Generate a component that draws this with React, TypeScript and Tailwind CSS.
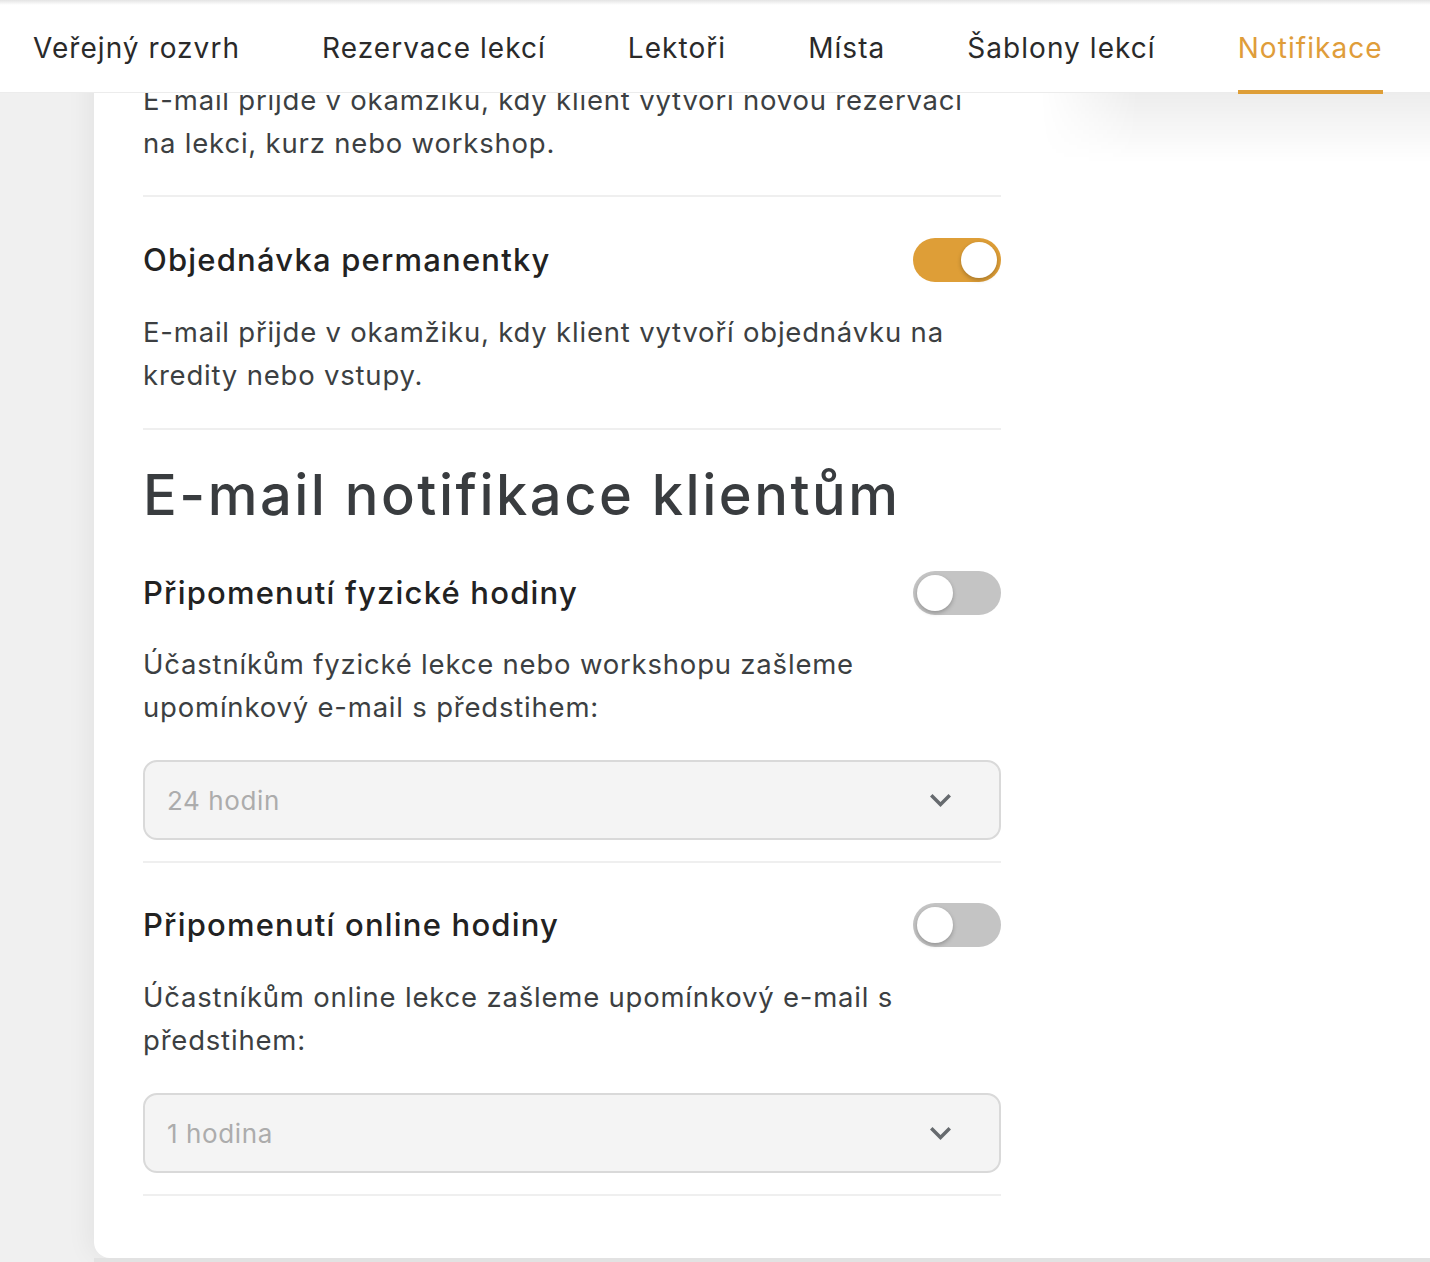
import React from 'react';

const tabs = ['Veřejný rozvrh', 'Rezervace lekcí', 'Lektoři', 'Místa', 'Šablony lekcí', 'Notifikace'];

const Toggle: React.FC<{ on?: boolean }> = ({ on = false }) => (
  <div
    className={`flex h-[44px] w-[88px] shrink-0 items-center rounded-full p-[4px] ${
      on ? 'justify-end bg-[#de9e37]' : 'justify-start bg-[#c4c4c4]'
    }`}
  >
    <div className="h-[36px] w-[36px] rounded-full bg-white shadow-[0_2px_4px_rgba(0,0,0,0.25)]" />
  </div>
);

const Divider: React.FC = () => <div className="h-[2px] w-full bg-[#efefef]" />;

const Select: React.FC<{ value: string }> = ({ value }) => (
  <div className="flex h-[80px] w-full items-center justify-between rounded-[14px] border-2 border-[#d9d9d9] bg-[#f4f4f4] pl-[22px] pr-[48px]">
    <span className="text-[26px] tracking-[0.6px] text-[#acacac]">{value}</span>
    <svg width="21" height="13" viewBox="0 0 21 13" fill="none">
      <path d="M2.5 2.5l8 8 8-8" stroke="#666a6e" strokeWidth="3.5" strokeLinecap="square" />
    </svg>
  </div>
);

const Row: React.FC<{ title: string; on?: boolean }> = ({ title, on }) => (
  <div className="flex h-[44px] items-center justify-between">
    <h3 className="text-[31px] font-medium tracking-[1.2px] text-[#222222]">{title}</h3>
    <Toggle on={on} />
  </div>
);

const Desc: React.FC<{ children: React.ReactNode }> = ({ children }) => (
  <p className="text-[27.5px] leading-[43px] tracking-[0.8px] text-[#3c3f42]">{children}</p>
);

export default function App() {
  return (
    <div
      className="relative h-[1262px] w-[1430px] overflow-hidden bg-[#f0f0f0]"
      style={{ fontFamily: 'Inter, "Noto Sans", sans-serif' }}
    >
      {/* top nav over the scrolled content */}
      <div className="absolute inset-x-0 top-0 z-10 h-[93px] border-b border-[#ececec] bg-white">
        <div className="h-[5px] w-full bg-gradient-to-b from-[#e4e4e4] to-white" />
        <nav className="flex h-[88px] gap-[82px] pl-[33px]">
          {tabs.map((t) => {
            const active = t === 'Notifikace';
            return (
              <div key={t} className="relative flex h-full items-center pb-[3px]">
                <span className={`text-[28px] tracking-[1.05px] ${active ? 'text-[#df9d3a]' : 'text-[#2a2a2a]'}`}>{t}</span>
                {active && <div className="absolute inset-x-0 -bottom-px h-[4px] bg-[#de9e37]" />}
              </div>
            );
          })}
        </nav>
      </div>
      <div className="pointer-events-none absolute left-[1040px] right-0 top-[93px] z-0 h-[70px] bg-gradient-to-b from-[rgba(0,0,0,0.07)] to-transparent [mask-image:linear-gradient(to_right,transparent,black_25%)]" />

      {/* card */}
      <div className="ml-[94px] h-[1258px] rounded-bl-[16px] bg-white shadow-[-6px_0_24px_rgba(0,0,0,0.05)]">
        <div className="w-[907px] pl-[49px] pt-[79px]">
          <Desc>
            E-mail přijde v okamžiku, kdy klient vytvoří novou rezervaci
            <br />
            na lekci, kurz nebo workshop.
          </Desc>
          <div className="mt-[30px]">
            <Divider />
          </div>

          <div className="mt-[41px]">
            <Row title="Objednávka permanentky" on />
          </div>
          <div className="mt-[29px]">
            <Desc>
              E-mail přijde v okamžiku, kdy klient vytvoří objednávku na
              <br />
              kredity nebo vstupy.
            </Desc>
          </div>
          <div className="mt-[31px]">
            <Divider />
          </div>

          <h2 className="mt-[31px] h-[68px] text-[56px] font-medium leading-[68px] tracking-[2.5px] text-[#393c3f]">
            E-mail notifikace klientům
          </h2>

          <div className="mt-[42px]">
            <Row title="Připomenutí fyzické hodiny" />
          </div>
          <div className="mt-[28px]">
            <Desc>
              Účastníkům fyzické lekce nebo workshopu zašleme
              <br />
              upomínkový e-mail s předstihem:
            </Desc>
          </div>
          <div className="mt-[31px]">
            <Select value="24 hodin" />
          </div>
          <div className="mt-[21px]">
            <Divider />
          </div>

          <div className="mt-[40px]">
            <Row title="Připomenutí online hodiny" />
          </div>
          <div className="mt-[29px]">
            <Desc>
              Účastníkům online lekce zašleme upomínkový e-mail s
              <br />
              předstihem:
            </Desc>
          </div>
          <div className="mt-[31px]">
            <Select value="1 hodina" />
          </div>
          <div className="mt-[21px]">
            <Divider />
          </div>
        </div>
      </div>
      <div className="absolute bottom-0 left-[94px] right-0 h-[4px] bg-[#e2e2e2]" />
    </div>
  );
}
